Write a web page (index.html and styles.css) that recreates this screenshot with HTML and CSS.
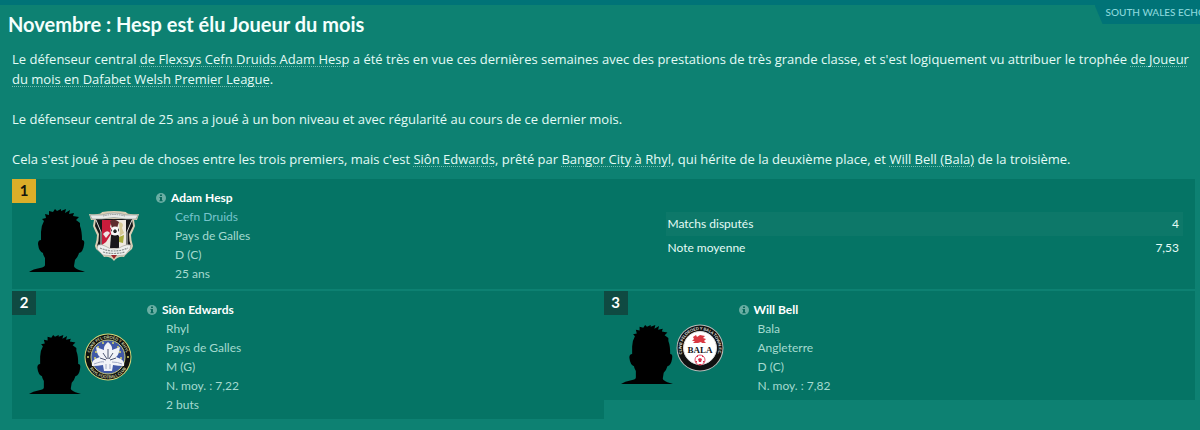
FILE: index.html
```html
<!DOCTYPE html>
<html lang="fr">
<head>
<meta charset="utf-8">
<meta name="viewport" content="width=device-width, initial-scale=1">
<title>Novembre : Hesp est élu Joueur du mois</title>
<link rel="stylesheet" href="styles.css">
</head>
<body>
<svg class="defs" aria-hidden="true">
  <symbol id="head" viewBox="0 0 56 63" preserveAspectRatio="none">
    <path d="M0 63Q4 60 11 59Q16 58 16 56V49Q14 46 14 44Q10 43 9 35Q9 31 12 31L12 23Q12 17 15 12L13 10L17 9L16 5L20 6L20 2L24 3L26 0L28 2L32 0L32 2L37 0L36 4L41 1L40 5L45 4L44 7L50 8L47 11L51 14L51 17Q53 22 53 31Q56 31 55 36Q54 43 50 44Q49 48 46 51L45 57Q45 59 50 61Q54 62 56 63Z"/>
  </symbol>
  <symbol id="info" viewBox="0 0 10 10">
    <circle cx="5" cy="5" r="5" fill="#69aea3"/>
    <path d="M4 1.5h2v1.4H4zM3.5 4H6v3.2h.7v1H3.4v-1H4V5h-.5z" fill="#08695c"/>
  </symbol>
</svg>
<main class="article">
  <div class="source">SOUTH WALES ECHO</div>
  <h1 class="title">Novembre : Hesp est élu Joueur du mois</h1>
  <div class="body">
    <p>Le défenseur central <a href="#">de Flexsys Cefn Druids Adam Hesp</a> a été très en vue ces dernières semaines avec des prestations de très grande classe, et s'est logiquement vu attribuer le trophée <a href="#">de Joueur du mois en Dafabet Welsh Premier League</a>.</p>
    <p>Le défenseur central de 25 ans a joué à un bon niveau et avec régularité au cours de ce dernier mois.</p>
    <p>Cela s'est joué à peu de choses entre les trois premiers, mais c'est <a href="#">Siôn Edwards</a>, prêté par <a href="#">Bangor City à Rhyl</a>, qui hérite de la deuxième place, et <a href="#">Will Bell (Bala)</a> de la troisième.</p>
  </div>
  <div class="podium">
    <section class="card card-first">
      <span class="rank rank-gold">1</span>
      <div class="media">
        <svg class="head"><use href="#head"/></svg>
        <svg class="crest" viewBox="0 0 52 50" role="img" aria-label="Cefn Druids">
          <path d="M1 3Q13 4 14 1Q26-1 38 1Q39 4 51 3L49 9H46L47 15Q45 20 43 24Q43 29 45 35L44 38Q38 43 36 46Q30 45 26 50Q22 45 16 46Q14 43 8 38L7 35Q9 29 9 24Q7 20 5 15L6 9H3Z" fill="#d9ceb4"/>
          <path d="M8 8H44L45 15Q43 19 41 23Q41 30 43 35L36 40H16L9 35Q11 30 11 23Q9 19 7 15Z" fill="#161719"/>
          <path d="M8 9L13 21V35M44 9L39 21V35" stroke="#d9dad6" stroke-width="1" fill="none"/>
          <path d="M14 9H38V34L32 38H20L14 34Z" fill="#eee9e0"/>
          <path d="M14 9H24L22 16L25 20L18 31L14 34Z" fill="#c91c3b"/>
          <path d="M15 23Q19 18 22 22L18 27Z" fill="#f1e4e5"/>
          <path d="M22 10Q26 7 31 11L29 17H24Z" fill="#5c2c2d"/>
          <path d="M23 24Q27 20 31 25V37H22Z" fill="#19171a"/>
          <path d="M31 11Q37 12 34 17L36 22L32 25Z" fill="#d5c996"/>
          <path d="M31 26L36 24L35 32L31 31Z" fill="#a9ac3a"/>
          <circle cx="27" cy="20" r="4.500" fill="#f7f7f7"/>
          <path d="M27 18L29 20L28 22H26L25 20ZM23 19L24 18V21ZM30 17L31 19L30 21Z" fill="#222"/>
          <path d="M2 4L14 4Q26 0 38 4L50 4L48 8L38 8Q26 5 14 8L4 8Z" fill="#e8eae8" stroke="#929b99" stroke-width=".7"/>
          <path d="M15 5Q26 2 37 5" stroke="#8f9695" stroke-width="1" stroke-dasharray="1.5 .8" fill="none"/>
          <path d="M10 34Q14 33 17 35Q26 41 35 35Q39 33 43 34L42 38L37 44Q26 46 15 44L9 38Z" fill="#eef0ee" stroke="#aaa69e" stroke-width=".7"/>
          <path d="M12 37Q26 43 40 37M15 41Q26 44 37 41" stroke="#898e8d" stroke-width="1.2" stroke-dasharray="2 .8" fill="none"/>
          <path d="M23 44H29L26 48Z" fill="#9c252a"/>
        </svg>
      </div>
      <div class="player">
        <h2 class="name"><button class="info" type="button" aria-label="Infos sur Adam Hesp"><svg><use href="#info"/></svg></button>Adam Hesp</h2>
        <ul class="facts"><li class="club">Cefn Druids</li><li>Pays de Galles</li><li>D (C)</li><li>25 ans</li></ul>
      </div>
      <table class="stats">
        <tbody>
          <tr><th scope="row">Matchs disputés</th><td>4</td></tr>
          <tr><th scope="row">Note moyenne</th><td>7,53</td></tr>
        </tbody>
      </table>
    </section>
    <section class="card">
      <span class="rank">2</span>
      <div class="media">
        <svg class="head"><use href="#head"/></svg>
        <svg class="crest" viewBox="0 0 48 48" role="img" aria-label="Rhyl">
          <defs><path id="rt" d="M5.500 24A18.500 18.500 0 0 1 42.500 24"/><path id="rb" d="M2.500 24A21.500 21.500 0 0 0 45.500 24"/></defs>
          <circle cx="24" cy="24" r="23.500" fill="#d8da7c"/>
          <circle cx="24" cy="24" r="22.500" fill="#111210"/>
          <circle cx="24" cy="24" r="17" fill="#4059a6" stroke="#c7ce83"/>
          <g fill="#d8d768"><circle cx="12" cy="19" r="1"/><circle cx="14" cy="14" r="1"/><circle cx="19" cy="10" r="1"/><circle cx="29" cy="10" r="1"/><circle cx="34" cy="14" r="1"/><circle cx="36" cy="19" r="1"/><circle cx="11" cy="25" r="1"/><circle cx="37" cy="25" r="1"/><circle cx="4" cy="24" r="1"/><circle cx="44" cy="24" r="1"/></g>
          <path d="M24 9Q29 13 28 17L36 14Q35 22 32 24L37 26Q41 29 40 33Q34 33 29 32L28 38H20L19 32Q14 33 8 33Q7 29 11 26L16 24Q13 22 12 14L20 17Q19 13 24 9Z" fill="#f1f3f8"/>
          <path d="M24 26V16M23 26L19 20M25 26L29 20M22 27L16 25M26 27L32 25" stroke="#4d5671" fill="none"/>
          <path d="M10 31Q18 28 20 29M28 29Q34 29 38 31M22 31V36M26 31V36" stroke="#a1aac4" fill="none"/>
          <g class="ring ring-cream"><text><textPath href="#rt" startOffset="50%">CLWB PEL-DROED Y RHYL</textPath></text><text><textPath href="#rb" startOffset="50%">RHYL FOOTBALL CLUB</textPath></text></g>
        </svg>
      </div>
      <div class="player">
        <h2 class="name"><button class="info" type="button" aria-label="Infos sur Siôn Edwards"><svg><use href="#info"/></svg></button>Siôn Edwards</h2>
        <ul class="facts"><li>Rhyl</li><li>Pays de Galles</li><li>M (G)</li><li>N. moy. : 7,22</li><li>2 buts</li></ul>
      </div>
    </section>
    <section class="card">
      <span class="rank">3</span>
      <div class="media">
        <svg class="head"><use href="#head"/></svg>
        <svg class="crest" viewBox="0 0 48 48" role="img" aria-label="Bala">
          <defs><path id="bt" d="M10 36.500A18.500 18.500 0 1 1 38 36.500"/></defs>
          <circle cx="24" cy="24" r="23.500" fill="#b9bdbb"/>
          <circle cx="24" cy="24" r="22.500" fill="#111"/>
          <circle cx="24" cy="24" r="16.500" fill="#fff" stroke="#ddd"/>
          <path d="M17 13L20 11L21 13L24 11L29 12L27 14L30 15L28 17L30 19H26L25 18L22 19H17L19 17L16 17L18 15Z" fill="#d93842"/>
          <circle cx="24" cy="36" r="5" fill="#fff" stroke="#e3546a"/>
          <path d="M24 34L26 35L25 38H23L22 35ZM20 33L22 31L22 33ZM26 31L28 33L26 33ZM19 37L21 37L21 39ZM27 37H29L27 39ZM23 40H25V41H23Z" fill="#d92b46"/>
          <text class="bala" x="24" y="29">BALA</text>
          <g class="ring"><text><textPath href="#bt" startOffset="50%">CLWB PELDROED Y BALA TOWN F.C.</textPath></text></g>
        </svg>
      </div>
      <div class="player">
        <h2 class="name"><button class="info" type="button" aria-label="Infos sur Will Bell"><svg><use href="#info"/></svg></button>Will Bell</h2>
        <ul class="facts"><li>Bala</li><li>Angleterre</li><li>D (C)</li><li>N. moy. : 7,82</li></ul>
      </div>
    </section>
  </div>
</main>
</body>
</html>
```
FILE: styles.css
```css
* { box-sizing: border-box; }

body {
  margin: 0;
  min-height: 100vh;
  background: #0d8172;
  color: #e4fbf6;
  font-family: Lato, "Open Sans", sans-serif;
  font-size: 14px;
  line-height: 20px;
}

.defs { display: none; }

.article {
  position: relative;
  overflow: hidden;
  min-height: 100vh;
  border-top: 5px solid #007377;
  padding: 9px 5px 11px 12px;
}

.source {
  position: absolute;
  top: 0;
  right: -6px;
  height: 19px;
  padding: 0 0 0 11px;
  background: #007377;
  clip-path: polygon(0 0, 100% 0, 100% 100%, 8px 100%);
  color: #8bd8dc;
  font-size: 10px;
  font-weight: 500;
  line-height: 14px;
  white-space: nowrap;
}

.title {
  margin: 0 0 15px -4px;
  color: #f4fffd;
  font-size: 20px;
  font-weight: 700;
  line-height: 20px;
}

.body { padding-right: 5px; font-family: "Open Sans", Lato, sans-serif; font-size: 13px; }
.body p { margin: 0 0 20px; }
.body p:last-child { margin-bottom: 10px; }

.body a {
  color: inherit;
  text-decoration: underline dotted #79bdb2 1px;
  text-underline-offset: 2px;
  text-decoration-skip-ink: none;
}

.podium {
  display: grid;
  grid-template-columns: 1fr 1fr;
  align-items: start;
  row-gap: 2px;
}

.card {
  position: relative;
  display: flex;
  padding: 9px 16px 5px 17px;
  background: #057465;
}

.card-first { grid-column: 1 / -1; padding-bottom: 6px; }

.rank {
  position: absolute;
  top: 0;
  left: 0;
  width: 24px;
  height: 24px;
  background: #0f4a42;
  color: #fff;
  font-size: 15px;
  font-weight: 700;
  line-height: 22px;
  text-align: center;
}

.rank-gold { background: #dbae29; color: #15150d; }

.media {
  display: flex;
  align-items: center;
  gap: 3px;
  width: 118px;
}

.head { width: 52px; height: 59px; margin-top: 14px; flex: none; }
.crest { width: 48px; height: 48px; flex: none; }

.card-first .media { width: 127px; }
.card-first .head { width: 56px; height: 63px; margin-top: 9px; }
.card-first .crest { width: 52px; height: 50px; }

.ring {
  fill: #e8e8e4;
  font-family: Lato, sans-serif;
  font-size: 4px;
  font-weight: 700;
  text-anchor: middle;
}

.ring-cream { fill: #d9d9a8; }

.bala {
  fill: #18181c;
  font-family: "Liberation Serif", serif;
  font-size: 9px;
  font-weight: 700;
  text-anchor: middle;
}

.player { font-size: 12px; line-height: 19px; }

.name {
  display: flex;
  align-items: center;
  gap: 5px;
  margin: 0;
  color: #fff;
  font-size: 12px;
  font-weight: 700;
}

.info {
  display: flex;
  padding: 0;
  border: 0;
  background: none;
}

.info svg { width: 10px; height: 10px; }

.facts {
  margin: 0;
  padding: 0 0 0 19px;
  list-style: none;
  color: #a4dacf;
}

.club { color: #76c4cc; }

.stats {
  align-self: center;
  width: 45%;
  margin: 0 -4px 0 auto;
  border-collapse: collapse;
  font-size: 12px;
}

.stats tr:first-child { background: #0d7869; }
.stats th, .stats td { height: 24px; padding: 0 4px; }
.stats th { padding-left: 2px; font-weight: 400; text-align: left; }
.stats td { text-align: right; }
```
